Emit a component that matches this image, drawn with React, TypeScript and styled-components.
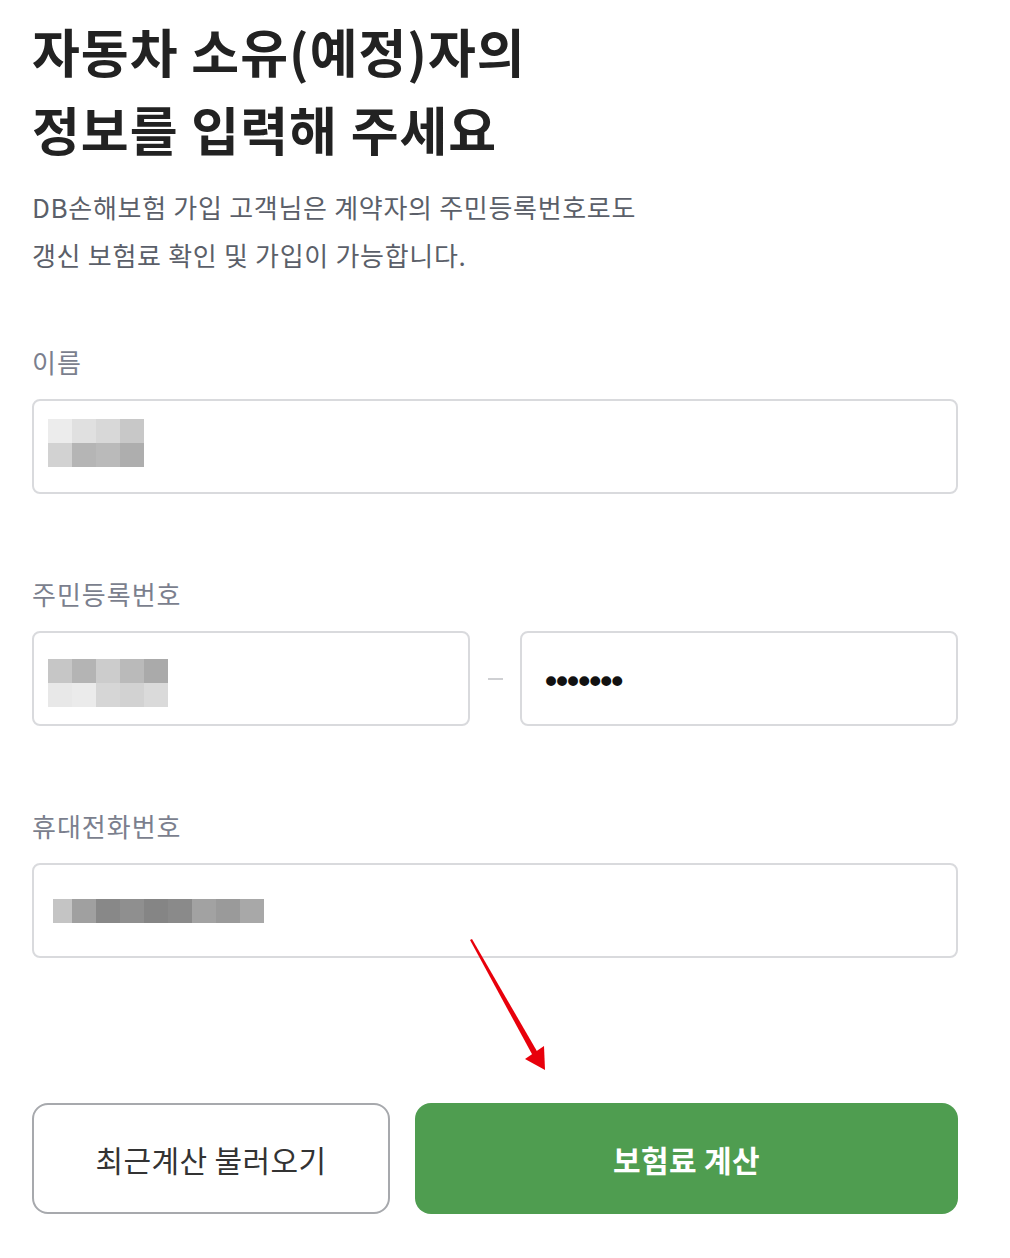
import React from 'react';
import styled, { createGlobalStyle } from 'styled-components';

const GlobalStyle = createGlobalStyle`
  html, body {
    margin: 0;
    padding: 0;
    background: #fff;
  }
  body {
    font-family: 'Noto Sans CJK KR', 'Noto Sans', sans-serif;
  }
`;

const nameBlocks = [
  ['#ececec', '#e0e0e0', '#d8d8d8', '#c8c8c8'],
  ['#d2d2d2', '#b5b5b5', '#bababa', '#aeaeae'],
];

const rrnBlocks = [
  ['#c6c6c6', '#b4b4b4', '#cccccc', '#bababa', '#aaaaaa'],
  ['#e8e8e8', '#ebebeb', '#d6d6d6', '#d2d2d2', '#dadada'],
];

const phoneBlocks = [
  ['#c4c4c4', '#a0a0a0', '#888888', '#8f8f8f', '#858585', '#8a8a8a', '#a2a2a2', '#9a9a9a', '#a8a8a8'],
];

const Mosaic: React.FC<{ rows: string[][]; first?: number; shift?: number }> = ({
  rows,
  first,
  shift = 0,
}) => (
  <MosaicGrid $shift={shift}>
    {rows.map((row, r) => (
      <MosaicRow key={r}>
        {row.map((c, i) => (
          <Tile key={i} $color={c} $w={i === 0 && first ? first : 24} />
        ))}
      </MosaicRow>
    ))}
  </MosaicGrid>
);

const App: React.FC = () => (
  <>
    <GlobalStyle />
    <Page>
      <Title>
        자동차 소유(예정)자의
        <br />
        정보를 입력해 주세요
      </Title>
      <Description>
        DB손해보험 가입 고객님은 계약자의 주민등록번호로도
        <br />
        갱신 보험료 확인 및 가입이 가능합니다.
      </Description>

      <Fields>
        <Field>
          <Label>이름</Label>
          <InputBox $pad={16}>
            <Mosaic rows={nameBlocks} shift={-4} />
          </InputBox>
        </Field>

        <Field>
          <Label>주민등록번호</Label>
          <SplitRow>
            <InputBox $pad={16} $grow>
              <Mosaic rows={rrnBlocks} shift={4} />
            </InputBox>
            <Dash />
            <InputBox $pad={16} $grow>
              <Masked>•••••••</Masked>
            </InputBox>
          </SplitRow>
        </Field>

        <Field>
          <Label>휴대전화번호</Label>
          <InputBox $pad={21}>
            <Mosaic rows={phoneBlocks} first={19} />
          </InputBox>
        </Field>
      </Fields>

      <Buttons>
        <OutlineButton>최근계산 불러오기</OutlineButton>
        <PrimaryButton>보험료 계산</PrimaryButton>
        <Arrow width="90" height="140" viewBox="0 0 90 140">
          <path d="M2 2 L4 1 L70 115 L65 118 Z" fill="#e8000b" />
          <path d="M77 132 L57 121 L76 108 Z" fill="#e8000b" />
        </Arrow>
      </Buttons>
    </Page>
  </>
);

// Styles
const Page = styled.div`
  width: 926px;
  padding: 12px 0 40px 32px;
  display: flex;
  flex-direction: column;
`;

const Title = styled.h1`
  margin: 0;
  font-size: 52px;
  line-height: 78px;
  font-weight: 700;
  color: #222;
  letter-spacing: 1px;
`;

const Description = styled.p`
  margin: 15px 0 0;
  font-size: 26px;
  line-height: 48px;
  color: #5b5f69;
  letter-spacing: 0.7px;
`;

const Fields = styled.div`
  display: flex;
  flex-direction: column;
  gap: 82px;
  margin-top: 65px;
`;

const Field = styled.div`
  display: flex;
  flex-direction: column;
`;

const Label = styled.div`
  font-size: 26px;
  line-height: 36px;
  color: #7b7f8e;
  margin-bottom: 19px;
  letter-spacing: 1px;
`;

const SplitRow = styled.div`
  display: flex;
  align-items: center;
`;

const InputBox = styled.div<{ $pad: number; $grow?: boolean }>`
  flex: ${(p) => (p.$grow ? '1 1 0' : 'none')};
  min-width: 0;
  height: 95px;
  box-sizing: border-box;
  border: 2px solid #d9dadd;
  border-radius: 8px;
  padding-left: ${(p) => p.$pad - 2}px;
  display: flex;
  align-items: center;
`;

const Dash = styled.div`
  width: 15px;
  height: 2px;
  background: #cfd0d3;
  margin: 0 17px 0 18px;
`;

const Masked = styled.span`
  font-family: 'DejaVu Sans', sans-serif;
  font-size: 34px;
  line-height: 1;
  letter-spacing: -9px;
  color: #111;
  margin: 6px 0 0 5px;
`;

const MosaicGrid = styled.div<{ $shift: number }>`
  display: flex;
  flex-direction: column;
  margin-top: ${(p) => p.$shift * 2}px;
`;

const MosaicRow = styled.div`
  display: flex;
`;

const Tile = styled.span<{ $color: string; $w: number }>`
  display: block;
  width: ${(p) => p.$w}px;
  height: 24px;
  background: ${(p) => p.$color};
`;

const Buttons = styled.div`
  position: relative;
  display: flex;
  gap: 25px;
  margin-top: 145px;
`;

const BaseButton = styled.button`
  height: 111px;
  box-sizing: border-box;
  border-radius: 16px;
  font-family: 'Noto Sans CJK KR', 'Noto Sans', sans-serif;
  font-size: 30px;
  letter-spacing: 0.4px;
  cursor: pointer;
`;

const OutlineButton = styled(BaseButton)`
  width: 358px;
  background: #fff;
  border: 2px solid #a7a9ad;
  color: #333;
  font-weight: 400;
`;

const PrimaryButton = styled(BaseButton)`
  flex: 1;
  background: #4f9d50;
  border: none;
  color: #fff;
  font-weight: 700;
`;

const Arrow = styled.svg`
  position: absolute;
  left: 436px;
  top: -165px;
  pointer-events: none;
`;

export default App;
